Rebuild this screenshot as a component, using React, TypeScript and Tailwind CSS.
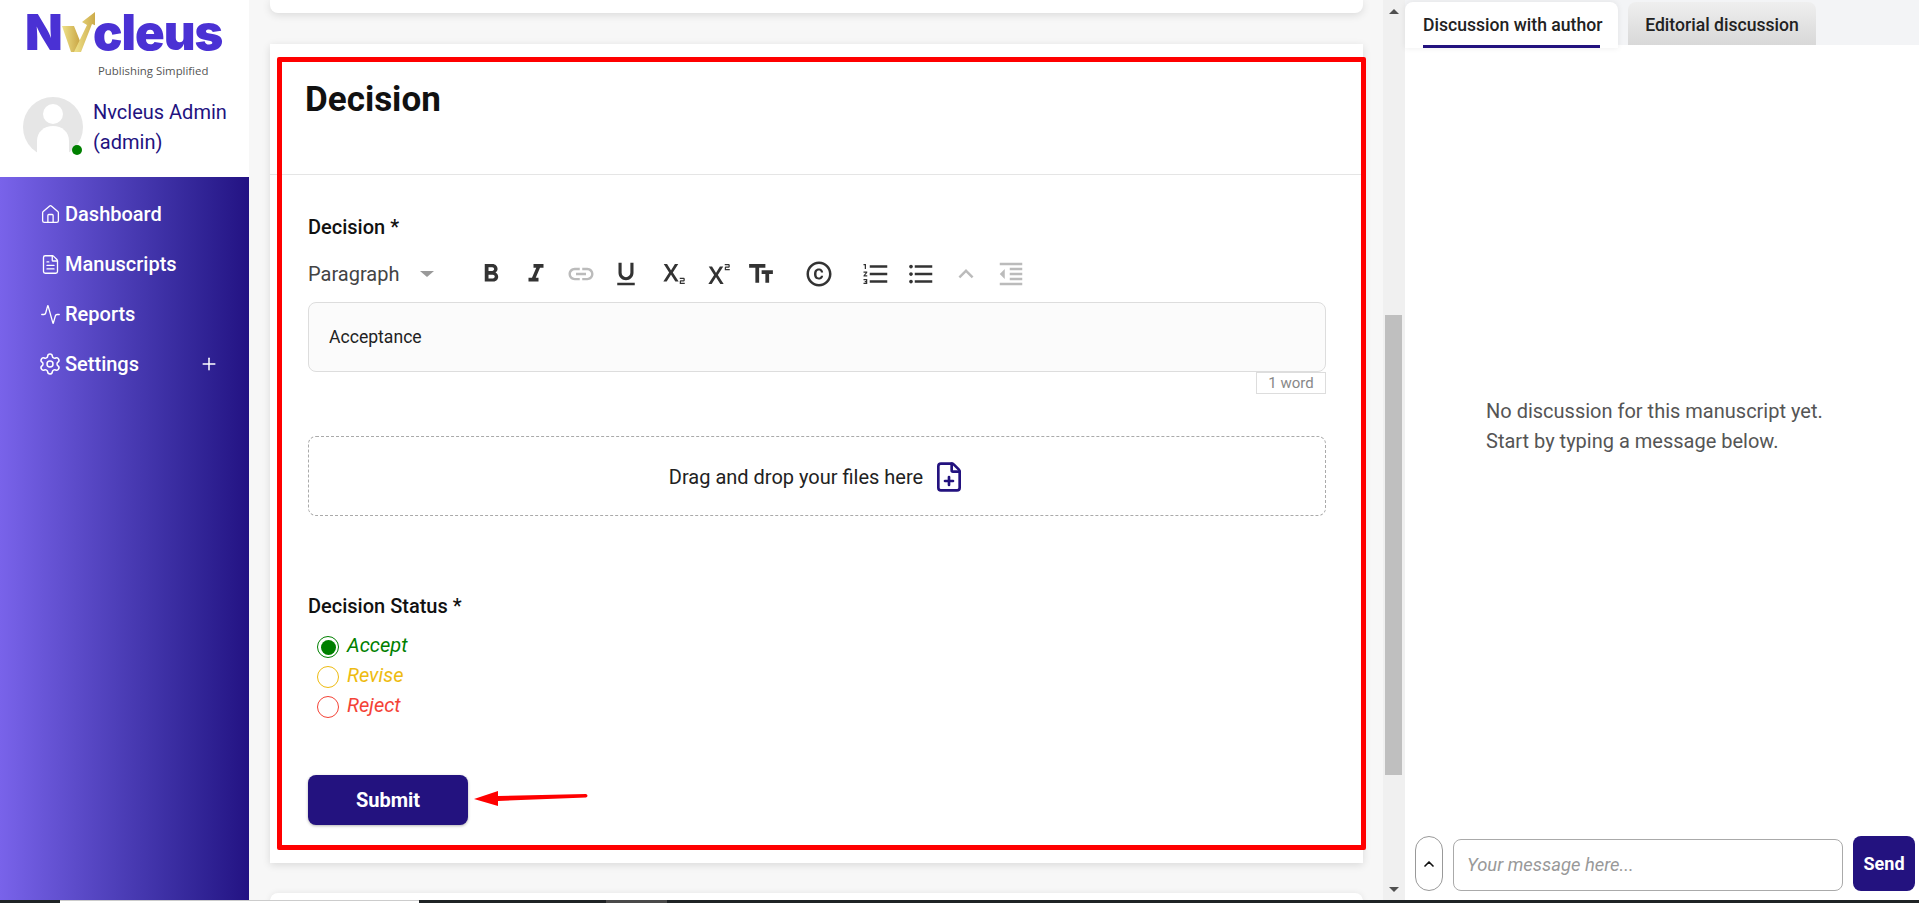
import { Activity, ChevronUp, FilePlus, FileText, Home, Plus, Settings } from "lucide-react";
import {
  MdExpandLess,
  MdFormatBold,
  MdFormatIndentDecrease,
  MdFormatItalic,
  MdFormatListBulleted,
  MdFormatListNumbered,
  MdFormatUnderlined,
  MdLink,
  MdOutlineCopyright,
  MdSubscript,
  MdSuperscript,
  MdTextFields,
} from "react-icons/md";

const navItems = [
  { label: "Dashboard", icon: Home, size: 21, iconClass: "mr-[4px]" },
  { label: "Manuscripts", icon: FileText, size: 21, iconClass: "mr-[4px]" },
  { label: "Reports", icon: Activity, size: 21, iconClass: "mr-[4px]" },
  { label: "Settings", icon: Settings, size: 24, iconClass: "-ml-[2px] mr-[3px]", expand: true },
];

const toolbar = [
  { icon: MdFormatBold, w: "w-[45px]" },
  { icon: MdFormatItalic, w: "w-[45px]" },
  { icon: MdLink, w: "w-[45px]", muted: true },
  { icon: MdFormatUnderlined, w: "w-[45px]" },
  { icon: MdSubscript, w: "w-[45px]" },
  { icon: MdSuperscript, w: "w-[46px]" },
  { icon: MdTextFields, w: "w-[43px]" },
  { icon: MdOutlineCopyright, w: "w-[74px]" },
  { icon: MdFormatListNumbered, w: "w-[40px]" },
  { icon: MdFormatListBulleted, w: "w-[50px]" },
  { icon: MdExpandLess, w: "w-[40px]", muted: true },
  { icon: MdFormatIndentDecrease, w: "w-[50px]", muted: true },
];

function Logo() {
  return (
    <div className="flex h-[97px] flex-col pl-[25px] pt-[8px]">
      <div className="flex h-[50px] items-end font-['Inter',sans-serif] text-[49px] font-black leading-[50px] tracking-[-1px] text-[#4a31d4]">
        <span className="w-[37px]">N</span>
        <svg width="34" height="44" viewBox="0 0 34 44" className="mb-[3px] ml-[-1px] shrink-0">
          <defs>
            <linearGradient id="gold" x1="0" y1="0" x2="1" y2="0">
              <stop offset="0" stopColor="#efe28a" />
              <stop offset="1" stopColor="#c9a544" />
            </linearGradient>
          </defs>
          <path d="M1 15 L13 15 L19 30 L14 41 L10 41 Z" fill="url(#gold)" />
          <path d="M13 41 L26 14 L21 11 L34 1 L36 15 L31 13 L20 41 Z" fill="url(#gold)" />
        </svg>
        <span className="ml-[-2px]">cleus</span>
      </div>
      <div className="ml-[73px] mt-[6px] font-['Open_Sans',sans-serif] text-[11.4px] leading-[14px] text-[#555]">
        Publishing Simplified
      </div>
    </div>
  );
}

function Sidebar() {
  return (
    <aside className="flex w-[249px] shrink-0 flex-col">
      <div className="h-[177px] bg-white">
        <Logo />
        <div className="flex pl-[23px]">
          <div className="relative h-[60px] w-[60px] shrink-0">
            <svg width="60" height="60" viewBox="0 0 60 60">
              <circle cx="30" cy="30" r="30" fill="#e6e6e6" />
              <circle cx="30" cy="17" r="10" fill="#fff" />
              <path d="M14 60 V44 C14 35 21 29 30 29 C39 29 46 35 46 44 V60 Z" fill="#fff" />
            </svg>
            <span className="absolute left-[49px] top-[48px] h-[10px] w-[10px] rounded-full bg-[#008000]" />
          </div>
          <div className="ml-[10px] text-[20px] leading-[30px] text-[#23127f]">
            Nvcleus Admin
            <br />
            (admin)
          </div>
        </div>
      </div>
      <nav className="flex-1 bg-gradient-to-r from-[#7963ea] to-[#231283] pl-[40px] pr-[30px] pt-[12px]">
        {navItems.map((item) => (
          <div key={item.label} className="flex h-[50px] items-center text-[20px] font-medium text-white">
            <item.icon size={item.size} strokeWidth={1.5} className={`shrink-0 ${item.iconClass}`} />
            <span className="flex-1">{item.label}</span>
            {item.expand && <Plus size={20} strokeWidth={1.8} />}
          </div>
        ))}
      </nav>
    </aside>
  );
}

function Radio({ label, ring, text, checked }: { label: string; ring: string; text: string; checked?: boolean }) {
  return (
    <div className="flex h-[30px] items-center pl-[9px]">
      <span className={`flex h-[22px] w-[22px] items-center justify-center rounded-full border-[1.5px] ${ring}`}>
        {checked && <span className="h-[15px] w-[15px] rounded-full bg-[#008000]" />}
      </span>
      <span className={`mb-[5px] ml-[8px] text-[20px] italic ${text}`}>{label}</span>
    </div>
  );
}

function DecisionCard() {
  return (
    <section className="relative mt-[31px] h-[819px] shrink-0 bg-white shadow-[0_2px_8px_rgba(0,0,0,0.12)]">
      <div className="h-[131px] border-b border-[#e5e5e5] pl-[35px] pt-[36px]">
        <h1 className="text-[35px] font-bold leading-[40px] text-[#111]">Decision</h1>
      </div>
      <div className="pl-[38px] pr-[37px] pt-[40px]">
        <div className="text-[20px] font-medium leading-[24px] text-[#111]">Decision *</div>
        <div className="mt-[12px] flex h-[46px] items-center text-[#333]">
          <div className="flex w-[160px] items-center text-[20px] text-[#444]">
            <span className="w-[112px]">Paragraph</span>
            <span className="h-0 w-0 border-x-[7px] border-t-[6px] border-x-transparent border-t-[#999]" />
          </div>
          {toolbar.map((tool, i) => (
            <span key={i} className={`flex justify-center ${tool.w} ${tool.muted ? "text-[#bbb]" : ""}`}>
              <tool.icon size={30} />
            </span>
          ))}
        </div>
        <div className="mt-[5px] flex h-[70px] items-center rounded-[8px] border border-[#ddd] bg-[#fbfbfb] pl-[20px] text-[17.6px] text-[#222]">
          Acceptance
        </div>
        <div className="flex justify-end">
          <span className="flex h-[22px] w-[70px] items-center justify-center border border-[#ddd] text-[15px] text-[#888]">
            1 word
          </span>
        </div>
        <div className="mt-[42px] flex h-[80px] items-center justify-center rounded-[8px] border border-dashed border-[#aaa] pt-[2px] text-[20px] text-[#222]">
          Drag and drop your files here
          <FilePlus size={32} strokeWidth={2} className="ml-[10px] text-[#23127f]" />
        </div>
        <div className="mt-[78px] text-[20px] font-medium leading-[24px] text-[#111]">Decision Status *</div>
        <div className="mt-[14px]">
          <Radio label="Accept" ring="border-[#008000]" text="text-[#008000]" checked />
          <Radio label="Revise" ring="border-[#eebb11]" text="text-[#eebb11]" />
          <Radio label="Reject" ring="border-[#f44336]" text="text-[#f44336]" />
        </div>
        <button className="mt-[53px] h-[50px] w-[160px] rounded-[8px] bg-[#23127f] text-[20px] font-bold text-white shadow-[0_1px_3px_rgba(0,0,0,0.3)]">
          Submit
        </button>
      </div>
      {/* annotation drawn over the card */}
      <div className="pointer-events-none absolute left-[7px] top-[13px] h-[793px] w-[1089px] rounded-[2px] border-[5px] border-[#ff0000]" />
      <svg width="116" height="16" viewBox="0 0 116 16" className="absolute left-[203px] top-[746px]">
        <path d="M1 9 L25 1 L25 6 L113 4 Q116 5.5 113 7.5 L25 11 L25 16 Z" fill="#ff0000" />
      </svg>
    </section>
  );
}

function MainColumn() {
  return (
    <main className="flex h-[900px] w-[1134px] shrink-0 flex-col overflow-hidden bg-[#f7f7f7] px-[21px] pr-[20px]">
      <div className="h-[13px] shrink-0 rounded-b-[8px] bg-white shadow-[0_2px_8px_rgba(0,0,0,0.12)]" />
      <DecisionCard />
      <div className="mt-[30px] h-[60px] shrink-0 rounded-t-[8px] bg-white shadow-[0_0_6px_rgba(0,0,0,0.08)]" />
    </main>
  );
}

function Scrollbar() {
  return (
    <div className="flex w-[22px] shrink-0 flex-col bg-[#f0f0f0] pl-[2px] pr-[3px]">
      <div className="flex h-[14px] items-end justify-center">
        <span className="h-0 w-0 border-x-[5px] border-b-[5px] border-x-transparent border-b-[#505050]" />
      </div>
      <div className="mt-[301px] h-[460px] bg-[#bfbfbf]" />
      <div className="flex flex-1 items-end justify-center pb-[8px]">
        <span className="h-0 w-0 border-x-[5px] border-t-[5px] border-x-transparent border-t-[#505050]" />
      </div>
    </div>
  );
}

function DiscussionPanel() {
  return (
    <div className="flex min-w-0 flex-1 flex-col bg-white">
      <div className="flex h-[45px] shrink-0 items-start bg-[#f3f4f6] pt-[2px]">
        <div className="z-10 h-[46px] w-[213px] rounded-t-[8px] bg-white px-[18px] shadow-[0_0_6px_rgba(0,0,0,0.08)]">
          <div className="h-[46px] whitespace-nowrap border-b-[3px] border-[#23127f] text-center text-[17.6px] font-medium leading-[46px] text-[#222]">
            Discussion with author
          </div>
        </div>
        <div className="ml-[10px] h-[43px] w-[188px] rounded-t-[8px] bg-gradient-to-b from-[#efefef] to-[#d8d8d8] text-center text-[17.6px] font-medium leading-[46px] text-[#222]">
          Editorial discussion
        </div>
      </div>
      <div className="flex-1 pl-[81px] pt-[351px] text-[20px] leading-[30px] text-[#555]">
        No discussion for this manuscript yet.
        <br />
        Start by typing a message below.
      </div>
      <div className="flex items-end pb-[9px] pl-[10px] pr-[4px]">
        <button className="flex h-[55px] w-[28px] items-center justify-center rounded-full border border-[#999]">
          <ChevronUp size={16} strokeWidth={2.5} className="text-[#111]" />
        </button>
        <div className="ml-[10px] flex h-[52px] w-[390px] items-center rounded-[8px] border border-[#aaa] pl-[13px] text-[18.4px] italic text-[#999]">
          Your message here...
        </div>
        <button className="ml-[10px] h-[55px] w-[62px] rounded-[8px] bg-[#23127f] text-[18px] font-bold text-white">Send</button>
      </div>
    </div>
  );
}

export default function App() {
  return (
    <div className="flex h-[903px] flex-col overflow-hidden bg-[#f7f7f7] font-['Roboto',sans-serif]">
      <div className="flex h-[900px] shrink-0">
        <Sidebar />
        <MainColumn />
        <Scrollbar />
        <DiscussionPanel />
      </div>
      <div className="flex h-[3px] shrink-0 bg-[#1f2325]">
        <div className="ml-[60px] w-[359px] border-t border-[#ccc] bg-white" />
        <div className="ml-[187px] w-[61px] bg-[#4a4a4a]" />
      </div>
    </div>
  );
}
